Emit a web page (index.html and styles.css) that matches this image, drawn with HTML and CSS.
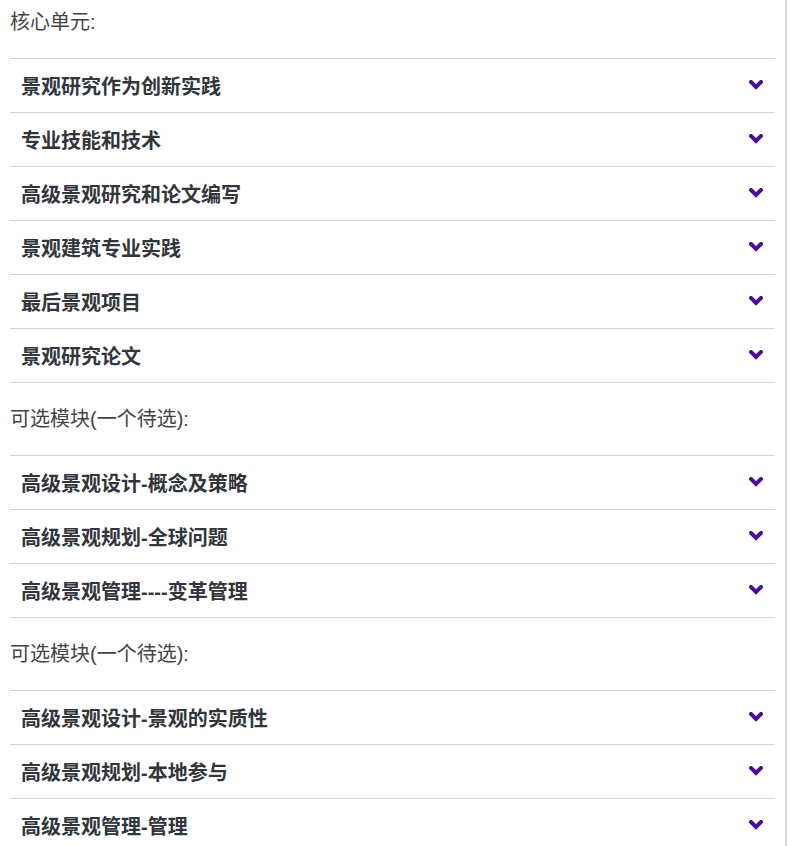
FILE: index.html
```html
<!DOCTYPE html>
<html>
<head>
  <meta charset="utf-8">
  <title>课程模块</title>
  <link rel="stylesheet" href="styles.css">
</head>
<body>
  <div class="pagina">

    <p class="titulo primeiro">核心单元:</p>
    <ul class="lista">
      <li><span>景观研究作为创新实践</span><svg class="seta" viewBox="0 0 14 10"><polyline points="2,2 7,7 12,2"/></svg></li>
      <li><span>专业技能和技术</span><svg class="seta" viewBox="0 0 14 10"><polyline points="2,2 7,7 12,2"/></svg></li>
      <li><span>高级景观研究和论文编写</span><svg class="seta" viewBox="0 0 14 10"><polyline points="2,2 7,7 12,2"/></svg></li>
      <li><span>景观建筑专业实践</span><svg class="seta" viewBox="0 0 14 10"><polyline points="2,2 7,7 12,2"/></svg></li>
      <li><span>最后景观项目</span><svg class="seta" viewBox="0 0 14 10"><polyline points="2,2 7,7 12,2"/></svg></li>
      <li><span>景观研究论文</span><svg class="seta" viewBox="0 0 14 10"><polyline points="2,2 7,7 12,2"/></svg></li>
    </ul>

    <p class="titulo">可选模块(一个待选):</p>
    <ul class="lista">
      <li><span>高级景观设计-概念及策略</span><svg class="seta" viewBox="0 0 14 10"><polyline points="2,2 7,7 12,2"/></svg></li>
      <li><span>高级景观规划-全球问题</span><svg class="seta" viewBox="0 0 14 10"><polyline points="2,2 7,7 12,2"/></svg></li>
      <li><span>高级景观管理----变革管理</span><svg class="seta" viewBox="0 0 14 10"><polyline points="2,2 7,7 12,2"/></svg></li>
    </ul>

    <p class="titulo">可选模块(一个待选):</p>
    <ul class="lista">
      <li><span>高级景观设计-景观的实质性</span><svg class="seta" viewBox="0 0 14 10"><polyline points="2,2 7,7 12,2"/></svg></li>
      <li><span>高级景观规划-本地参与</span><svg class="seta" viewBox="0 0 14 10"><polyline points="2,2 7,7 12,2"/></svg></li>
      <li><span>高级景观管理-管理</span><svg class="seta" viewBox="0 0 14 10"><polyline points="2,2 7,7 12,2"/></svg></li>
    </ul>

  </div>
</body>
</html>
```

FILE: styles.css
```css
body {
  margin: 0;
  background-color: #fff;
  font-family: "Liberation Sans", "Noto Sans CJK SC", sans-serif;
  overflow: hidden;
}

.pagina {
  width: 765px;
  padding: 0 10px;
  border-right: 2px solid #d8d8d8;
  min-height: 100vh;
}

.titulo {
  margin: 0;
  padding: 24px 0;
  font-size: 20px;
  line-height: 24px;
  color: #444;
}

.titulo.primeiro {
  padding-top: 10px;
}

.lista {
  list-style: none;
  margin: 0;
  padding: 0;
  border-bottom: 1px solid #d3d3d3;
}

.lista li {
  display: flex;
  align-items: center;
  justify-content: space-between;
  height: 53px;
  padding: 0 12px 0 11px;
  border-top: 1px solid #d3d3d3;
  font-size: 20px;
  font-weight: bold;
  color: #30363b;
}

.seta {
  width: 14px;
  height: 10px;
  fill: none;
  stroke: #4a0d9c;
  stroke-width: 4;
  stroke-linecap: square;
  margin-top: -1px;
}
```
